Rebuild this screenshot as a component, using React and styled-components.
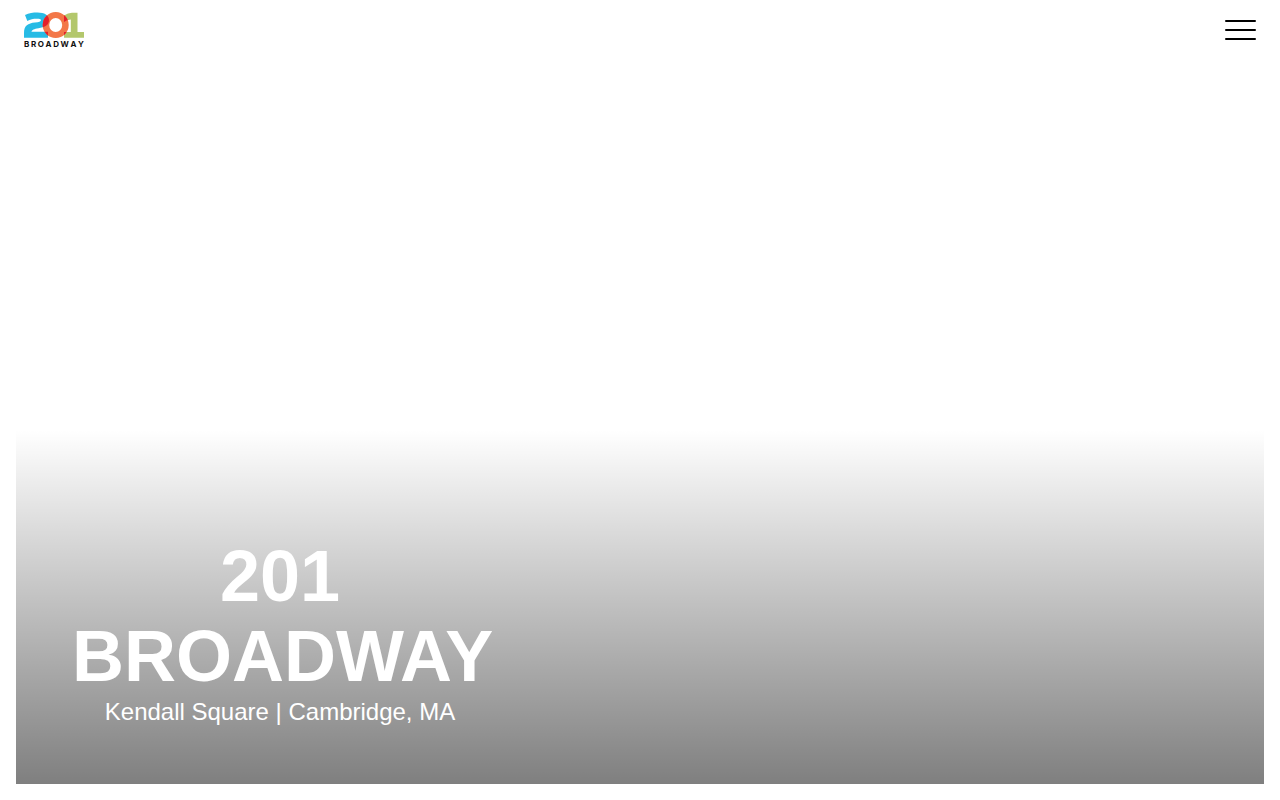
import React from 'react';
import styled, { createGlobalStyle } from 'styled-components';

const GlobalStyle = createGlobalStyle`
  * {
    box-sizing: border-box;
  }

  body {
    margin: 0;
    background-color: #ffffff;
    font-family: "Liberation Sans", Arial, sans-serif;
  }
`;

function Logo() {
  return (
    <LogoMark viewBox="0 0 60 26" aria-hidden="true">
      <defs>
        <clipPath id="ring">
          <path clipRule="evenodd" d="M31.7 0a13 13 0 0 1 0 26a13 13 0 0 1 0-26ZM31.7 6a6.5 7 0 0 0 0 14a6.5 7 0 0 0 0-14Z" />
        </clipPath>
        <path id="two" d="M1 3C5 1 9 .5 13.5.5C20.5.5 25 3.2 25 8C25 13.500 20.500 15.300 14.500 16.200C10 17 8 17.700 7.500 19.700H24V25.700H0V21C0 13.500 4 11.300 11 10.500C15 10 17 9.500 17 8.200C17 7 15.500 6.700 12.500 6.700C9.500 6.700 6 7.300 3.300 9Z" />
        <path id="one" d="M40 3.500Q44 .8 48 .8H53.500V20H60V25.700H40V20H46.800V7.500Q43 7.500 40 10Z" />
      </defs>
      <use href="#two" fill="#27bbe5" />
      <use href="#one" fill="#b3c76c" />
      <path fill="#f37748" fillRule="evenodd" d="M31.7 0a13 13 0 0 1 0 26a13 13 0 0 1 0-26ZM31.7 6a6.5 7 0 0 0 0 14a6.5 7 0 0 0 0-14Z" />
      <g clipPath="url(#ring)" fill="#e4202b">
        <use href="#two" />
        <use href="#one" />
      </g>
    </LogoMark>
  );
}

function App() {
  return (
    <>
      <GlobalStyle />
      <Page>
        <Header>
          <LogoLink href="/">
            <Logo />
            <LogoText>
              {'BROADWAY'.split('').map((letter, i) => (
                <span key={i}>{letter}</span>
              ))}
            </LogoText>
          </LogoLink>
          <MenuButton type="button" aria-label="Open menu">
            <MenuBar />
            <MenuBar />
            <MenuBar />
          </MenuButton>
        </Header>
        <Hero>
          <HeroText>
            <Title>201 BROADWAY</Title>
            <Subtitle>Kendall Square | Cambridge, MA</Subtitle>
          </HeroText>
        </Hero>
      </Page>
    </>
  );
}

const Page = styled.div`
  display: flex;
  flex-direction: column;
  min-height: 100vh;
`;

const Header = styled.header`
  display: flex;
  align-items: center;
  justify-content: space-between;
  height: 60px;
  padding: 0 24px;
`;

const LogoLink = styled.a`
  display: flex;
  flex-direction: column;
  gap: 3px;
  width: 60px;
  color: #111111;
  text-decoration: none;
`;

const LogoMark = styled.svg`
  display: block;
  width: 100%;
`;

const LogoText = styled.span`
  display: flex;
  justify-content: space-between;
  font-family: Inter, "Liberation Sans", sans-serif;
  font-size: 8px;
  font-weight: bold;
  line-height: 7px;
`;

const MenuButton = styled.button`
  display: flex;
  flex-direction: column;
  gap: 7px;
  padding: 0;
  border: none;
  background: none;
  cursor: pointer;
`;

const MenuBar = styled.span`
  width: 31px;
  height: 2px;
  border-radius: 1px;
  background-color: #000000;
`;

const Hero = styled.main`
  display: flex;
  flex: 1;
  align-items: flex-end;
  margin: 16px;
  padding: 56px;
  background-image: linear-gradient(to bottom, rgba(0, 0, 0, 0) 50%, rgba(0, 0, 0, 0.5) 100%);
`;

const HeroText = styled.div`
  width: 416px;
  color: #ffffff;
  text-align: center;
`;

const Title = styled.h1`
  margin: 0;
  font-size: 72px;
  font-weight: bold;
  line-height: 80px;
`;

const Subtitle = styled.p`
  margin: 0;
  font-size: 24px;
  line-height: 32px;
`;

export default App;
